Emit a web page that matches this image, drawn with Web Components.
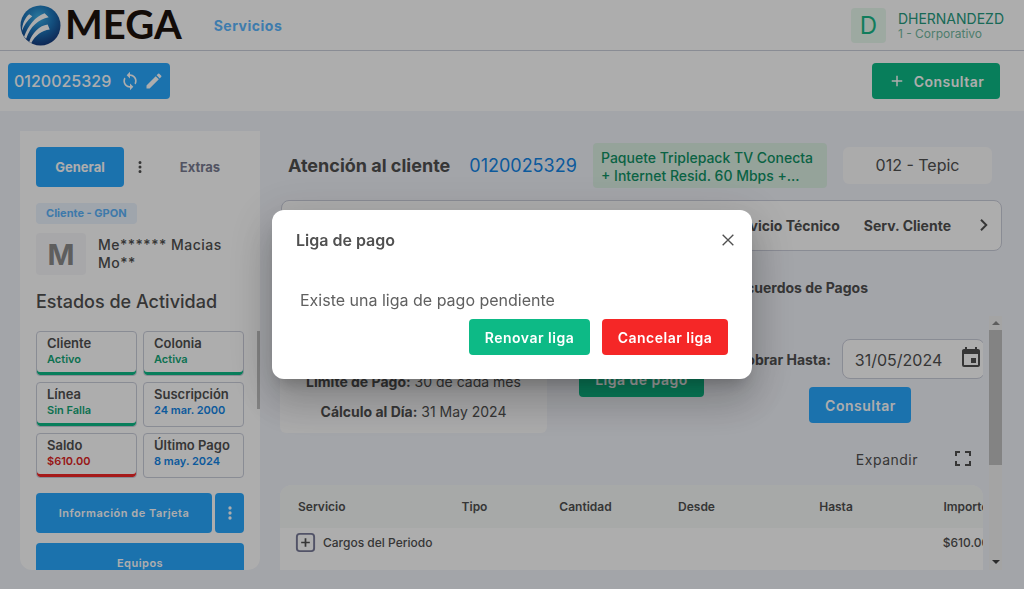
<!DOCTYPE html>
<html lang="es">
<head>
<meta charset="utf-8">
<title>Mega - Atención al cliente</title>
<style>
html,body{margin:0;height:100%}
body{font-family:Inter,"Liberation Sans",sans-serif;color:#505050;background:#f1f3f9;
--blue:#29a8ff;--link:#1285e6;--green:#0dba86;--red:#f52727;--line:#cbcedb;overflow:hidden}
</style>
</head>
<body>
<mega-app></mega-app>
<script>
const ICONS={
sync:'<path d="M12 4V1L8 5l4 4V6c3.31 0 6 2.69 6 6 0 1.01-.25 1.97-.7 2.8l1.46 1.46A7.93 7.93 0 0 0 20 12c0-4.42-3.58-8-8-8zm0 14c-3.31 0-6-2.69-6-6 0-1.01.25-1.97.7-2.8L5.24 7.74A7.93 7.93 0 0 0 4 12c0 4.42 3.58 8 8 8v3l4-4-4-4v3z"/>',
edit:'<path d="M3 17.25V21h3.75L17.81 9.94l-3.75-3.75L3 17.25zM20.71 7.04a1 1 0 0 0 0-1.41l-2.34-2.34a1 1 0 0 0-1.41 0l-1.83 1.83 3.75 3.75 1.83-1.83z"/>',
dots:'<path d="M12 8a2 2 0 1 0 0-4 2 2 0 0 0 0 4zm0 2a2 2 0 1 0 0 4 2 2 0 0 0 0-4zm0 6a2 2 0 1 0 0 4 2 2 0 0 0 0-4z"/>',
plus:'<path d="M19 13h-6v6h-2v-6H5v-2h6V5h2v6h6z"/>',
close:'<path d="M4 4l16 16M20 4L4 20" fill="none" stroke="currentColor" stroke-width="2"/>',
right:'<path d="M8 5l7 7-7 7" fill="none" stroke="currentColor" stroke-width="2.6"/>',
event:'<path d="M17 12h-5v5h5v-5zM16 1v2H8V1H6v2H5c-1.11 0-1.99.9-1.99 2L3 19a2 2 0 0 0 2 2h14c1.1 0 2-.9 2-2V5c0-1.1-.9-2-2-2h-1V1h-2zm3 18H5V8h14v11z"/>',
full:'<path d="M5 9V5h4M14 5h5v4M19 14v4h-5M9 18H5v-4" fill="none" stroke="currentColor" stroke-width="2"/>',
box:'<rect x="3" y="3" width="18" height="18" rx="3" fill="none" stroke="#797b99" stroke-width="2"/><path d="M12 7.500v9M7.500 12h9" fill="none" stroke="currentColor" stroke-width="1.800"/>'
};
const define=(name,html,setup)=>{
  const t=document.createElement('template');
  t.innerHTML='<style>*{box-sizing:border-box}button{font:inherit;color:inherit;border:0;background:none;padding:0;margin:0;cursor:pointer}h1,h2,p{margin:0}</style>'+html;
  customElements.define(name,class extends HTMLElement{
    constructor(){super();this.attachShadow({mode:'open'}).append(t.content.cloneNode(true))}
    connectedCallback(){if(setup)setup(this,this.shadowRoot)}
  });
};

define('ui-icon',`<style>:host{display:inline-flex;width:var(--size,24px);height:var(--size,24px);flex:none}svg{width:100%;height:100%;fill:currentColor}</style><svg viewBox="0 0 24 24" aria-hidden="true"></svg>`,
 (el,r)=>{r.querySelector('svg').innerHTML=ICONS[el.getAttribute('name')]});

define('ui-button',`<style>
:host{display:block;flex:none;height:36px;color:#fff;font-size:14px;font-weight:600;letter-spacing:.5px}
button{width:100%;height:100%;padding:0 var(--pad,16px);border-radius:var(--radius,4px);background:var(--fill,var(--blue));display:flex;align-items:center;justify-content:center;gap:8px;white-space:nowrap;letter-spacing:inherit}
:host([tone=green]){--fill:var(--green)}:host([tone=red]){--fill:var(--red)}
:host([tone=plain]){--fill:transparent;color:#797b91}
</style><button type="button"><slot></slot></button>`,
 (el,r)=>{const l=el.getAttribute('label');if(l)r.querySelector('button').setAttribute('aria-label',l)});

define('brand-logo',`<style>:host{display:flex;align-items:center;gap:4px}svg{width:41px;height:41px}
span{font:700 40px/46px Lato,"Liberation Sans",sans-serif;padding-bottom:2px;color:#1d120c}</style>
<svg viewBox="0 0 40 40" aria-hidden="true"><defs><radialGradient id="g" cx=".45" cy=".3" r=".75"><stop offset="0" stop-color="#3db1e8"/><stop offset=".5" stop-color="#1c73b8"/><stop offset="1" stop-color="#153375"/></radialGradient></defs>
<circle cx="20" cy="20" r="19.500" fill="url(#g)"/>
<g fill="#fff"><path d="M2 25C2 19 5 12 9 9l3 2C7 15 4 20 2 25z"/><path d="M4 31C8 20 15 11 24 8l4 4C18 14 10 21 6 33z"/><path d="M9 36c3-9 10-16 18-17l2 5C21 25 15 30 11 37z"/></g></svg><span>MEGA</span>`);

define('app-header',`<style>
:host{display:flex;align-items:center;height:50px;padding:0 20px;background:#fff;border-bottom:1px solid var(--line);flex:none}
a{margin-left:32px;margin-right:auto;color:#5cb7ff;font-size:14px;font-weight:700;letter-spacing:.5px;text-decoration:none}
.avatar{width:35px;height:35px;border-radius:4px;background:#e8f9ee;color:#19b888;font-size:24px;display:grid;place-items:center;margin-right:12px}
.name{font-size:14px;line-height:16px;margin-top:2px;color:#259b80}.org{font-size:12px;line-height:14px;color:#73b9a1}
</style><brand-logo></brand-logo><a href="#">Servicios</a><div class="avatar">D</div><div><div class="name">DHERNANDEZD</div><div class="org">1 - Corporativo</div></div>`);

define('account-bar',`<style>
:host{display:flex;justify-content:space-between;align-items:center;height:60px;padding:0 24px 0 8px;background:#fff;flex:none}
.acct{display:flex;align-items:center;height:36px;padding:0 6px;gap:4px;border-radius:4px;background:var(--blue);color:#fff;font-size:16px;font-weight:500}
.acct span{margin-right:5px}
.acct button{display:flex;--size:20px}
.new{width:128px;--size:18px}
</style><div class="acct"><span>0120025329</span><button type="button" aria-label="Actualizar"><ui-icon name="sync"></ui-icon></button><button type="button" aria-label="Editar"><ui-icon name="edit"></ui-icon></button></div>
<ui-button class="new" tone="green"><ui-icon name="plus"></ui-icon>Consultar</ui-button>`);

define('status-card',`<style>
:host{display:block;height:45px;padding:3px 10px;border:1px solid var(--line);border-radius:4px;font-weight:600;color:var(--link)}
:host([tone=ok]){color:#13a777;box-shadow:inset 0 -3px var(--green)}
:host([tone=bad]){color:#e02424;box-shadow:inset 0 -3px var(--red)}
b{display:block;font-weight:600;font-size:13px;line-height:16px;color:#505050;white-space:nowrap}
span{display:block;font-size:11px;line-height:16px;white-space:nowrap}
</style><b><slot name="label"></slot></b><span><slot></slot></span>`);

define('client-panel',`<style>
:host{display:flex;flex-direction:column;position:relative;min-height:0;padding:16px 16px 0;background:#fff;border-radius:0 0 12px 12px;overflow:hidden}
.tabs{display:grid;grid-template-columns:88px 32px 88px;align-items:center;--size:18px;flex:none}
.tabs ui-button{height:40px;font-size:13px;font-weight:700;letter-spacing:0}
.tabs>button{display:flex;justify-content:center}
.badge{align-self:flex-start;margin-top:16px;padding:0 10px;border-radius:4px;background:#eaf3fe;color:#5cb3fb;font-size:11px;line-height:21px;font-weight:700;flex:none}
.who{display:flex;align-items:center;gap:12px;margin-top:9px;flex:none}
.m{width:50px;height:42px;border-radius:4px;background:#f7f7fa;color:#8b8b8b;font-size:29px;font-weight:700;display:grid;place-items:center;flex:none}
.who p{font-size:14px;line-height:18px;font-weight:500;letter-spacing:.5px}
h2{margin-top:16px;font-size:18px;line-height:22px;font-weight:500;flex:none}
.scroll{margin-top:18px;min-height:0;overflow:hidden;flex:1}
.cards{display:grid;grid-template-columns:1fr 1fr;gap:6px}
.menu{display:grid;grid-template-columns:1fr 29px;gap:3px;margin:15px 0 10px;--size:20px}
.menu ui-button,.equip{height:40px;font-size:11px;letter-spacing:.5px}
.thumb{position:absolute;right:0;top:200px;width:3px;height:78px;background:#c1c1c1}
</style>
<div class="tabs"><ui-button>General</ui-button><button type="button" aria-label="Más"><ui-icon name="dots"></ui-icon></button><ui-button tone="plain">Extras</ui-button></div>
<div class="badge">Cliente - GPON</div>
<div class="who"><div class="m">M</div><p>Me****** Macias<br>Mo**</p></div>
<h2>Estados de Actividad</h2>
<div class="scroll"><div class="cards">
<status-card tone="ok"><span slot="label">Cliente</span>Activo</status-card>
<status-card tone="ok"><span slot="label">Colonia</span>Activa</status-card>
<status-card tone="ok"><span slot="label">Línea</span>Sin Falla</status-card>
<status-card><span slot="label">Suscripción</span>24 mar. 2000</status-card>
<status-card tone="bad"><span slot="label">Saldo</span>$610.00</status-card>
<status-card><span slot="label">Último Pago</span>8 may. 2024</status-card>
</div>
<div class="menu"><ui-button>Información de Tarjeta</ui-button><ui-button label="Opciones" style="--pad:0px"><ui-icon name="dots"></ui-icon></ui-button></div>
<ui-button class="equip">Equipos</ui-button></div><div class="thumb"></div>`);

define('customer-heading',`<style>
:host{display:flex;align-items:center;padding:0 10px 0 8px;flex:none;white-space:nowrap}
h1{font-size:18px;line-height:24px;font-weight:700}
a{margin-left:19px;margin-right:auto;font-size:18px;color:var(--link);text-decoration:none}
.plan{width:234px;padding:6px 8px 3px;border-radius:4px;background:#dcf0e4;color:#109265;font-size:14px;line-height:18px;font-weight:500}
.site{width:149px;margin-left:16px;border-radius:6px;background:#fcfcfd;font-size:16px;line-height:37px;text-align:center}
</style><h1>Atención al cliente</h1><a href="#">0120025329</a><div class="plan">Paquete Triplepack TV Conecta<br>+ Internet Resid. 60 Mbps +...</div><div class="site">012 - Tepic</div>`);

define('section-tabs',`<style>
:host{display:block;flex:none;font-size:14px;font-weight:700;white-space:nowrap}
.bar{display:flex;justify-content:flex-end;align-items:center;gap:24px;height:51px;margin-left:1px;padding:0 8px;border:1px solid var(--line);border-radius:8px;background:#fff}
.bar button{display:flex}
.bar .next{padding:0 0 2px;--size:18px}
.sub{display:flex;justify-content:flex-end;padding:28px 134px 0 0;line-height:18px}
</style><nav class="bar"><button type="button">Servicio Técnico</button><button type="button">Serv. Cliente</button><button class="next" type="button" aria-label="Siguiente"><ui-icon name="right"></ui-icon></button></nav><div class="sub"><button type="button">Acuerdos de Pagos</button></div>`);

define('payment-summary',`<style>
:host{display:grid;grid-template-columns:267px 125px 1fr;gap:32px;height:117px;flex:none;font-size:14px}
.card{display:flex;flex-direction:column;justify-content:flex-end;align-items:center;gap:12px;padding-bottom:12px;border-radius:6px;background:#fcfcfd;line-height:18px}
b{font-weight:700}
.pay{align-self:end;margin-bottom:36px}
.until{display:flex;flex-direction:column;align-items:center;gap:8px;padding-top:23px}
.row{display:flex;align-items:center;gap:11px;white-space:nowrap}
label{font-weight:700}
.field{display:flex;align-items:center;width:143px;height:40px;flex:none;border:1px solid var(--line);border-radius:8px;background:#fff;padding:0 1px 0 12px}
input{width:104px;border:0;padding:2px 0 0;background:none;font:400 16px Inter,sans-serif;color:inherit;outline:0}
.field button{display:flex;margin-bottom:3px}
.go{width:102px}
</style><div class="card"><div><b>Límite de Pago:</b> 30 de cada mes</div><div><b>Cálculo al Día:</b> 31 May 2024</div></div>
<ui-button class="pay" tone="green">Liga de pago</ui-button>
<div class="until"><div class="row"><label for="d">Cobrar Hasta:</label><div class="field"><input id="d" type="text" value="31/05/2024"><button type="button" aria-label="Calendario"><ui-icon name="event"></ui-icon></button></div></div><ui-button class="go">Consultar</ui-button></div>`);

define('charges-table',`<style>
:host{display:block;border-radius:12px 12px 0 0;overflow:hidden;background:#fff;font-size:12px;flex:1}
table{border-collapse:collapse;table-layout:fixed;min-width:732px;width:100%}
th,td{padding:0;text-align:center}th{height:43px;background:#f6f9f8;font-weight:600}
td{height:28px;font-weight:500}
th:first-child{text-align:left;padding-left:18px}
td:first-child{text-align:left;padding-left:14px;white-space:nowrap}
td div{display:flex;align-items:center;gap:6px;--size:23px}td button{display:flex}
</style><table><colgroup><col style="width:139px"><col style="width:111px"><col style="width:111px"><col style="width:111px"><col style="width:168px"><col></colgroup>
<thead><tr><th>Servicio</th><th>Tipo</th><th>Cantidad</th><th>Desde</th><th>Hasta</th><th>Importe</th></tr></thead>
<tbody><tr><td><div><button type="button" aria-label="Desplegar"><ui-icon name="box"></ui-icon></button>Cargos del Periodo</div></td><td></td><td></td><td></td><td></td><td>$610.00</td></tr></tbody></table>`);

define('scroll-rail',`<style>
:host{display:flex;flex-direction:column;align-items:center;width:13px;background:#f2f2f2}
.up,.down{border:4px solid transparent;flex:none}
.up{border-top:0;border-bottom-color:#8a8a8a;margin:5px 0}
.down{border-bottom:0;border-top-color:#404040;margin:auto 0 6px}
.thumb{width:13px;height:135px;background:#c1c1c1}
</style><div class="up"></div><div class="thumb"></div><div class="down"></div>`);

define('customer-view',`<style>
:host{display:flex;flex-direction:column;min-width:0;min-height:0;padding-top:12px}
section-tabs{margin-top:12px}
.area{display:flex;gap:6px;margin-top:19px;flex:1;min-height:0}
.body{display:flex;flex-direction:column;flex:1;min-width:0;overflow:hidden}
.expand{display:flex;align-items:center;align-self:flex-end;gap:33px;height:52px;flex:none;padding-right:8px;font-size:14px;letter-spacing:.5px}
</style><customer-heading></customer-heading><section-tabs></section-tabs>
<div class="area"><div class="body"><payment-summary></payment-summary><button class="expand" type="button">Expandir<ui-icon name="full"></ui-icon></button><charges-table></charges-table></div><scroll-rail></scroll-rail></div>`);

define('pay-dialog',`<style>
:host{position:fixed;inset:0;display:grid;place-items:center;background:rgba(0,0,0,.32)}
section{width:min(480px,90vw);padding:20px 24px 24px;border-radius:12px;background:#fff;box-shadow:0 11px 15px -7px rgba(0,0,0,.2),0 24px 38px 3px rgba(0,0,0,.14),0 9px 46px 8px rgba(0,0,0,.12)}
header{display:flex;justify-content:space-between;align-items:center;margin-right:-16px}
h2{font-size:16px;line-height:20px;font-weight:600}
header button{display:flex;--size:16px;padding:0 8px}
p{margin:40px 4px 9px;font-size:16px;line-height:20px;color:#606060}
footer{display:flex;justify-content:flex-end;gap:12px}
.a{width:121px}.b{width:126px}
</style><section role="dialog" aria-modal="true" aria-labelledby="t"><header><h2 id="t">Liga de pago</h2><button type="button" aria-label="Cerrar"><ui-icon name="close"></ui-icon></button></header><p>Existe una liga de pago pendiente</p><footer><ui-button class="a" tone="green">Renovar liga</ui-button><ui-button class="b" tone="red">Cancelar liga</ui-button></footer></section>`);

define('mega-app',`<style>
:host{display:flex;flex-direction:column;height:100vh}
app-header{height:51px}
main{display:grid;grid-template-columns:240px minmax(0,1fr);grid-template-rows:minmax(0,1fr);gap:20px;padding:20px 22px 19px 20px;flex:1;min-height:0}
</style><app-header></app-header><account-bar></account-bar><main><client-panel></client-panel><customer-view></customer-view></main><pay-dialog></pay-dialog>`);
</script>
</body>
</html>
